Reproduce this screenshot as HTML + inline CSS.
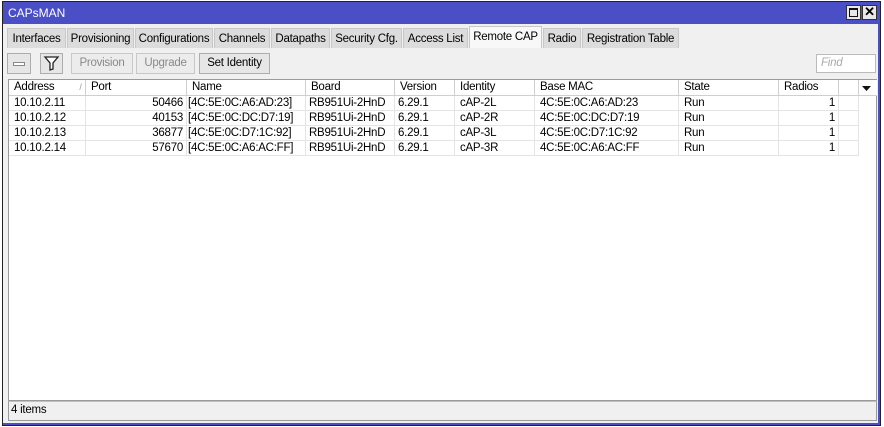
<!DOCTYPE html>
<html><head><style>
*{box-sizing:border-box;margin:0;padding:0}
body{width:884px;height:427px;background:#fff;font-family:"Liberation Sans",sans-serif;font-size:11.5px;letter-spacing:-0.25px;color:#000;position:relative;overflow:hidden}
.abs{position:absolute}
#win{left:2px;top:1px;width:879px;height:425px;background:#4a4fc6;border:1px solid #222}
#title{left:8px;top:4px;color:#fff;font-size:12px;line-height:18px;letter-spacing:0}
#body{left:3px;top:24px;width:875px;height:399px;background:#f0f0f0}
.tab{position:absolute;top:28px;height:20px;line-height:20px;background:#dcdcdc;border:1px solid #c8c8c8;border-bottom:none;text-align:center;white-space:nowrap}
.tab.act{background:#f8f8f8;top:26px;height:22px;}
.btn{position:absolute;top:53px;height:21px;line-height:19px;border:1px solid #adadad;background:#e6e6e6;text-align:center}
.dis{color:#8a8a8a;background:#ececec;border-color:#c8c8c8}
#tbl{left:8px;top:79px;width:869px;height:322px;background:#fff;border:1px solid #9a9a9a}
.hd{position:absolute;top:0;height:16px;line-height:15px;border-right:1px solid #cfcfcf;border-bottom:1px solid #cfcfcf;padding-left:5px;background:#fff}
.c{position:absolute;height:15px;line-height:15px;padding-left:5px;border-right:1px solid #e4e4e4;border-bottom:1px solid #e4e4e4;white-space:nowrap}
.r{text-align:right;padding-right:3px}
#status{left:8px;top:401px;width:869px;height:20px;border:1px solid #9a9a9a;border-top:1px solid #c0c0c0;background:#f0f0f0;line-height:17px;padding-left:2px}
</style></head><body>
<div id="win" class="abs"></div>
<div id="title" class="abs">CAPsMAN</div>
<div class="abs" style="left:846px;top:5px;width:15px;height:15px;background:#e8e8e8;border:1px solid #333"><div style="position:absolute;left:2px;top:2px;width:9px;height:9px;border:1px solid #111;border-top-width:2px"></div></div>
<div class="abs" style="left:862px;top:5px;width:15px;height:15px;background:#e8e8e8;border:1px solid #333;font-size:13px;line-height:12px;text-align:center;font-weight:bold">✕</div>
<div id="body" class="abs"></div>
<div class="tab" style="left:7px;width:59px">Interfaces</div>
<div class="tab" style="left:67px;width:67px">Provisioning</div>
<div class="tab" style="left:135px;width:78px">Configurations</div>
<div class="tab" style="left:214px;width:56px">Channels</div>
<div class="tab" style="left:271px;width:59px">Datapaths</div>
<div class="tab" style="left:331px;width:71px">Security Cfg.</div>
<div class="tab" style="left:403px;width:65px">Access List</div>
<div class="tab act" style="left:469px;width:73px">Remote CAP</div>
<div class="tab" style="left:543px;width:38px">Radio</div>
<div class="tab" style="left:582px;width:97px">Registration Table</div>
<div class="btn" style="left:7px;width:24px"><div style="position:absolute;left:5px;top:8px;width:12px;height:4px;border:1px solid #888;background:#fff"></div></div>
<div class="btn" style="left:40px;width:23px"><svg width="21" height="19" viewBox="0 0 21 19"><path d="M4 3h13l-5 6v6l-3 1V9z" fill="#fff" stroke="#222" stroke-width="1.3"/></svg></div>
<div class="btn dis" style="left:71px;width:62px">Provision</div>
<div class="btn dis" style="left:136px;width:59px">Upgrade</div>
<div class="btn" style="left:199px;width:71px">Set Identity</div>
<div class="abs" style="left:816px;top:54px;width:60px;height:19px;background:#fff;border:1px solid #bbb;color:#aaa;font-style:italic;line-height:17px;padding-left:4px">Find</div>
<div id="tbl" class="abs">
<div class="hd" style="left:0;width:77px">Address <span style="color:#999;font-size:9px;margin-left:22px">/</span></div>
<div class="hd" style="left:77px;width:101px">Port</div>
<div class="hd" style="left:178px;width:119px">Name</div>
<div class="hd" style="left:297px;width:89px">Board</div>
<div class="hd" style="left:386px;width:60px">Version</div>
<div class="hd" style="left:446px;width:80px">Identity</div>
<div class="hd" style="left:526px;width:144px">Base MAC</div>
<div class="hd" style="left:670px;width:100px">State</div>
<div class="hd" style="left:770px;width:60px">Radios</div>
<div class="hd" style="left:830px;width:20px"></div>
<div class="hd" style="left:850px;width:18px;border-right:none"><svg width="12" height="12" style="position:absolute;left:2px;top:2px"><path d="M1 4h9l-4.5 5z" fill="#111"/></svg></div>
</div>
<div class="abs" style="left:9px;top:96px" id="rows"></div>
<div id="status" class="abs">4 items</div>
<script>
var d=[["10.10.2.11","50466","[4C:5E:0C:A6:AD:23]","cAP-2L","4C:5E:0C:A6:AD:23"],["10.10.2.12","40153","[4C:5E:0C:DC:D7:19]","cAP-2R","4C:5E:0C:DC:D7:19"],["10.10.2.13","36877","[4C:5E:0C:D7:1C:92]","cAP-3L","4C:5E:0C:D7:1C:92"],["10.10.2.14","57670","[4C:5E:0C:A6:AC:FF]","cAP-3R","4C:5E:0C:A6:AC:FF"]];
var h="";d.forEach(function(r,i){var t=i*15;
h+='<div class="c" style="top:'+t+'px;left:0;width:77px">'+r[0]+'</div>';
h+='<div class="c r" style="top:'+t+'px;left:77px;width:101px">'+r[1]+'</div>';
h+='<div class="c" style="top:'+t+'px;left:178px;width:119px;padding-left:1px">'+r[2]+'</div>';
h+='<div class="c" style="top:'+t+'px;left:297px;width:89px;padding-left:3px">RB951Ui-2HnD</div>';
h+='<div class="c" style="top:'+t+'px;left:386px;width:60px;padding-left:3px">6.29.1</div>';
h+='<div class="c" style="top:'+t+'px;left:446px;width:80px">'+r[3]+'</div>';
h+='<div class="c" style="top:'+t+'px;left:526px;width:144px">'+r[4]+'</div>';
h+='<div class="c" style="top:'+t+'px;left:670px;width:100px">Run</div>';
h+='<div class="c r" style="top:'+t+'px;left:770px;width:60px">1</div>';
h+='<div class="c" style="top:'+t+'px;left:830px;width:20px"></div>';});
document.getElementById("rows").innerHTML=h;
</script>
</body></html>
